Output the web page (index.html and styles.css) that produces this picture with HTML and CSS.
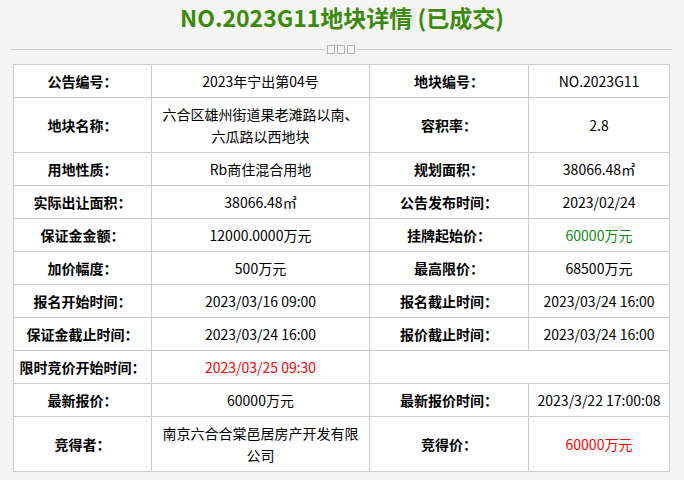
FILE: index.html
```html
<!DOCTYPE html>
<html lang="zh">
<head>
<meta charset="utf-8">
<link rel="stylesheet" href="styles.css">
</head>
<body>
<div class="page">
  <h1 class="title">NO.2023G11地块详情 (已成交)</h1>
  <div class="divider">
    <span class="line"></span>
    <span class="boxes"><i></i><i></i><i></i></span>
    <span class="line"></span>
  </div>
  <table class="info">
    <colgroup>
      <col class="c1"><col class="c2"><col class="c3"><col class="c4">
    </colgroup>
    <tr><th>公告编号：</th><td>2023年宁出第04号</td><th>地块编号：</th><td>NO.2023G11</td></tr>
    <tr><th>地块名称：</th><td>六合区雄州街道果老滩路以南、六瓜路以西地块</td><th>容积率：</th><td>2.8</td></tr>
    <tr><th>用地性质：</th><td>Rb商住混合用地</td><th>规划面积：</th><td>38066.48㎡</td></tr>
    <tr><th>实际出让面积：</th><td>38066.48㎡</td><th>公告发布时间：</th><td>2023/02/24</td></tr>
    <tr><th>保证金金额：</th><td>12000.0000万元</td><th>挂牌起始价：</th><td class="green">60000万元</td></tr>
    <tr><th>加价幅度：</th><td>500万元</td><th>最高限价：</th><td>68500万元</td></tr>
    <tr><th>报名开始时间：</th><td>2023/03/16 09:00</td><th>报名截止时间：</th><td>2023/03/24 16:00</td></tr>
    <tr><th>保证金截止时间：</th><td>2023/03/24 16:00</td><th>报价截止时间：</th><td>2023/03/24 16:00</td></tr>
    <tr><th>限时竞价开始时间：</th><td class="red">2023/03/25 09:30</td><td colspan="2"></td></tr>
    <tr><th>最新报价：</th><td>60000万元</td><th>最新报价时间：</th><td>2023/3/22 17:00:08</td></tr>
    <tr><th>竞得者：</th><td>南京六合合棠邑居房产开发有限公司</td><th>竞得价：</th><td class="red">60000万元</td></tr>
  </table>
</div>
</body>
</html>
```

FILE: styles.css
```css
html, body {
  margin: 0;
  padding: 0;
  background: #f4f5f4;
}
body {
  font-family: "Microsoft YaHei", "Noto Sans CJK SC", "Noto Sans", sans-serif;
  color: #000;
}
.page {
  width: 684px;
  padding-top: 0;
}
.title {
  margin: 0;
  text-align: center;
  font-size: 23px;
  line-height: 34px;
  font-weight: bold;
  color: #3b8a0b;
}
.divider {
  display: flex;
  align-items: center;
  margin: 10px 12px 0 10px;
  height: 10px;
}
.divider .line {
  flex: 1;
  height: 1px;
  background: #cfcfcf;
}
.boxes {
  display: flex;
  gap: 2px;
  padding: 0 3px;
}
.boxes i {
  display: block;
  width: 6px;
  height: 7px;
  border: 1px solid #b5b5b5;
}
.info {
  margin: 10px 0 0 13px;
  width: 657px;
  border-collapse: collapse;
  table-layout: fixed;
  background: #fff;
  font-size: 14px;
  line-height: 22px;
}
.c1 { width: 138px; }
.c2 { width: 218px; }
.c3 { width: 159px; }
.c4 { width: 141px; }
.info th, .info td {
  border: 1px solid #cccccc;
  padding: 5px 4px;
  text-align: center;
  vertical-align: middle;
}
.info th {
  font-weight: bold;
}
.info td {
  font-weight: normal;
}
.green { color: #138a13; }
.red { color: #ff0000; }
```
